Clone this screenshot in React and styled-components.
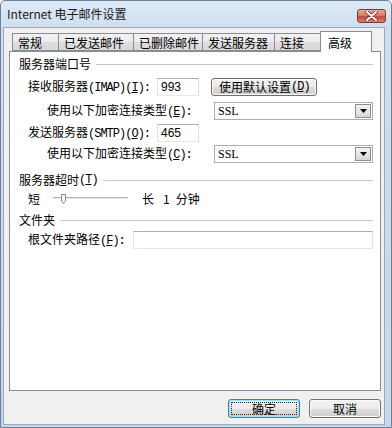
import React from 'react';
import styled, { createGlobalStyle } from 'styled-components';

const GlobalStyle = createGlobalStyle`
  html, body { margin: 0; padding: 0; background: #ffffff; }
  * { box-sizing: border-box; }
`;

const FONT = `"Noto Sans CJK SC", "Liberation Sans", sans-serif`;

const Window = styled.div`
  width: 392px;
  height: 428px;
  display: flex;
  flex-direction: column;
  background: linear-gradient(180deg, #dfeaf6 0px, #cfdeef 26px, #c6d7ec 100%);
  border: 1px solid #6d7f96;
  border-radius: 5px 5px 0 0;
  font-family: ${FONT};
  font-size: 12px;
  color: #000;
`;

const TitleBar = styled.div`
  height: 26px;
  flex: none;
  display: flex;
  align-items: flex-start;
  justify-content: space-between;
  padding: 0 5px 0 6px;
`;

const Title = styled.span`
  margin-top: 5px;
  line-height: 16px;
  font-size: 12px;
  color: #1a1a1a;
`;

const CloseButton = styled.div`
  margin-top: 8px;
  width: 29px;
  height: 14px;
  border: 1px solid #7e3b32;
  border-radius: 3px;
  background: linear-gradient(180deg, #eaa898 0%, #d87a68 45%, #c4483a 55%, #d9806e 100%);
  display: flex;
  align-items: center;
  justify-content: center;
`;

const Client = styled.div`
  flex: 1;
  margin: 0 6px 2px 2px;
  background: #f0f0f0;
  border: 1px solid #9aa9bc;
  display: flex;
  flex-direction: column;
  padding: 3px 3px 6px 5px;
`;

const TabStrip = styled.div`
  display: flex;
  align-items: flex-end;
  height: 21px;
  padding-left: 3px;
  margin-bottom: -1px;
  position: relative;
  z-index: 1;
`;

const Tab = styled.div`
  width: ${p => p.$w}px;
  height: ${p => (p.$active ? 21 : 18)}px;
  margin-bottom: ${p => (p.$active ? 0 : 1)}px;
  margin-right: -1px;
  padding-left: ${p => (p.$active ? 7 : 5)}px;
  padding-top: ${p => (p.$active ? 3 : 1)}px;
  line-height: 16px;
  border: 1px solid #898c95;
  border-bottom: ${p => (p.$active ? 'none' : '1px solid #898c95')};
  background: ${p => (p.$active ? '#ffffff' : 'linear-gradient(180deg, #f3f3f3 0%, #ebebeb 50%, #dedede 51%, #d8d8d8 100%)')};
  white-space: nowrap;
`;

const Panel = styled.div`
  flex: 1;
  background: #ffffff;
  border: 1px solid #898c95;
  display: flex;
  flex-direction: column;
  padding: 5px 7px 0 9px;
`;

const GroupHeader = styled.div`
  display: flex;
  align-items: center;
  height: 14px;
  line-height: 14px;
  margin-top: ${p => p.$mt || 0}px;
  white-space: nowrap;
  &::after {
    content: '';
    flex: 1;
    height: 1px;
    background: #c4cad1;
    margin-left: 5px;
  }
`;

const Mono = styled.span`
  font-family: "Liberation Mono", "DejaVu Sans Mono", monospace;
  font-size: 12px;
  letter-spacing: -1px;
`;

const Row = styled.div`
  display: flex;
  align-items: center;
  height: ${p => p.$h || 18}px;
  margin-top: ${p => p.$mt || 0}px;
  padding-left: ${p => p.$indent || 0}px;
  white-space: nowrap;
`;

const Label = styled.span`
  width: ${p => p.$w}px;
  flex: none;
  line-height: 16px;
`;

const TextBox = styled.div`
  width: ${p => p.$w}px;
  height: ${p => p.$h || 18}px;
  flex: none;
  border: 1px solid #abadb3;
  border-right-color: #dbdfe6;
  border-bottom-color: #e3e9ef;
  border-left-color: #e2e3ea;
  background: #fff;
  padding-left: 3px;
  line-height: 16px;
  font-family: "Liberation Sans", "Noto Sans CJK SC", sans-serif;
  font-size: 12px;
`;

const PushButton = styled.div`
  height: 18px;
  margin-left: 12px;
  padding: 0 6px 0 7px;
  border: 1px solid #707070;
  border-radius: 3px;
  background: linear-gradient(180deg, #f2f2f2 0%, #ebebeb 50%, #dddddd 51%, #cfcfcf 100%);
  box-shadow: inset 0 0 0 1px #fcfcfc;
  line-height: 16px;
  display: flex;
  align-items: center;
`;

const Select = styled.div`
  width: 159px;
  height: 18px;
  flex: none;
  border: 1px solid #abadb3;
  background: #fff;
  display: flex;
  align-items: center;
  justify-content: space-between;
  padding: 0 1px 0 3px;
  font-family: "Liberation Serif", "Noto Sans CJK SC", serif;
  font-size: 12px;
`;

const DropButton = styled.div`
  width: 16px;
  height: 14px;
  border: 1px solid #8e8f8f;
  background: linear-gradient(180deg, #f4f4f4 0%, #e6e6e6 50%, #d6d6d6 100%);
  display: flex;
  align-items: center;
  justify-content: center;
`;

const Slider = styled.div`
  width: 76px;
  height: 12px;
  flex: none;
  display: flex;
  align-items: center;
`;

const TimeText = styled.div`
  display: flex;
  align-items: center;
  margin-left: ${p => p.$ml || 0}px;
  gap: ${p => p.$gap}px;
  line-height: 16px;
`;

const ButtonRow = styled.div`
  display: flex;
  justify-content: flex-end;
  gap: 9px;
  margin-top: 8px;
  flex: none;
`;

const DialogButton = styled.div`
  width: 72px;
  height: 19px;
  position: relative;
  border: 1px solid ${p => (p.$default ? '#3c7fb1' : '#707070')};
  border-radius: 3px;
  background: linear-gradient(180deg, #f2f2f2 0%, #ebebeb 50%, #dddddd 51%, #cfcfcf 100%);
  box-shadow: inset 0 0 0 1px ${p => (p.$default ? '#9fe3fb' : '#fcfcfc')};
  display: flex;
  align-items: center;
  justify-content: center;
  line-height: 16px;
  &::after {
    content: '';
    display: ${p => (p.$default ? 'block' : 'none')};
    position: absolute;
    inset: 2px;
    border: 1px dotted #202020;
  }
`;

const Arrow = () => (
  <svg width="7" height="4" viewBox="0 0 7 4">
    <path d="M0 0 H7 L3.5 4 Z" fill="#000" />
  </svg>
);

const ComboBox = () => (
  <Select>
    <span>SSL</span>
    <DropButton>
      <Arrow />
    </DropButton>
  </Select>
);

export default function App() {
  return (
    <>
      <GlobalStyle />
      <Window>
        <TitleBar>
          <Title>Internet 电子邮件设置</Title>
          <CloseButton>
            <svg width="13" height="10" viewBox="0 0 13 10">
              <path d="M2 1 L11 9 M11 1 L2 9" stroke="#5a2620" strokeWidth="3.4" strokeLinecap="round" />
              <path d="M2 1 L11 9 M11 1 L2 9" stroke="#ffffff" strokeWidth="2" strokeLinecap="round" />
            </svg>
          </CloseButton>
        </TitleBar>
        <Client>
          <TabStrip>
            <Tab $w={47}>常规</Tab>
            <Tab $w={76}>已发送邮件</Tab>
            <Tab $w={70}>已删除邮件</Tab>
            <Tab $w={73}>发送服务器</Tab>
            <Tab $w={47}>连接</Tab>
            <Tab $w={52} $active>高级</Tab>
          </TabStrip>
          <Panel>
            <GroupHeader>服务器端口号</GroupHeader>
            <Row $mt={7} $indent={9}>
              <Label $w={129}>接收服务器<Mono>(IMAP)(<u>I</u>):</Mono></Label>
              <TextBox $w={42}>993</TextBox>
              <PushButton>使用默认设置<Mono>(<u>D</u>)</Mono></PushButton>
            </Row>
            <Row $mt={6} $indent={28}>
              <Label $w={167}>使用以下加密连接类型<Mono>(<u>E</u>):</Mono></Label>
              <ComboBox />
            </Row>
            <Row $mt={4} $indent={9}>
              <Label $w={129}>发送服务器<Mono>(SMTP)(<u>O</u>):</Mono></Label>
              <TextBox $w={42}>465</TextBox>
            </Row>
            <Row $mt={3} $indent={28}>
              <Label $w={167}>使用以下加密连接类型<Mono>(<u>C</u>):</Mono></Label>
              <ComboBox />
            </Row>
            <GroupHeader $mt={10}>服务器超时<Mono>(<u>T</u>)</Mono></GroupHeader>
            <Row $mt={4} $h={16} $indent={9}>
              <Label $w={25}>短</Label>
              <Slider>
                <svg width="76" height="12" viewBox="0 0 76 12">
                  <line x1="0" y1="4.5" x2="75" y2="4.5" stroke="#b4b4b4" strokeWidth="1" />
                  <line x1="0" y1="5.5" x2="75" y2="5.5" stroke="#e6e6e6" strokeWidth="1" />
                  <path d="M8.5 1.5 H12.5 V8 L10.5 10.5 L8.5 8 Z" fill="#f4f4f4" stroke="#8a8a8a" strokeWidth="1" />
                </svg>
              </Slider>
              <TimeText $ml={13} $gap={9}>
                <span>长</span>
                <TimeText $gap={6}>
                  <span>1</span>
                  <span>分钟</span>
                </TimeText>
              </TimeText>
            </Row>
            <GroupHeader $mt={6}>文件夹</GroupHeader>
            <Row $mt={4} $indent={9}>
              <Label $w={105}>根文件夹路径<Mono>(<u>F</u>):</Mono></Label>
              <TextBox $w={240} $h={18} />
            </Row>
          </Panel>
          <ButtonRow>
            <DialogButton $default>确定</DialogButton>
            <DialogButton>取消</DialogButton>
          </ButtonRow>
        </Client>
      </Window>
    </>
  );
}
